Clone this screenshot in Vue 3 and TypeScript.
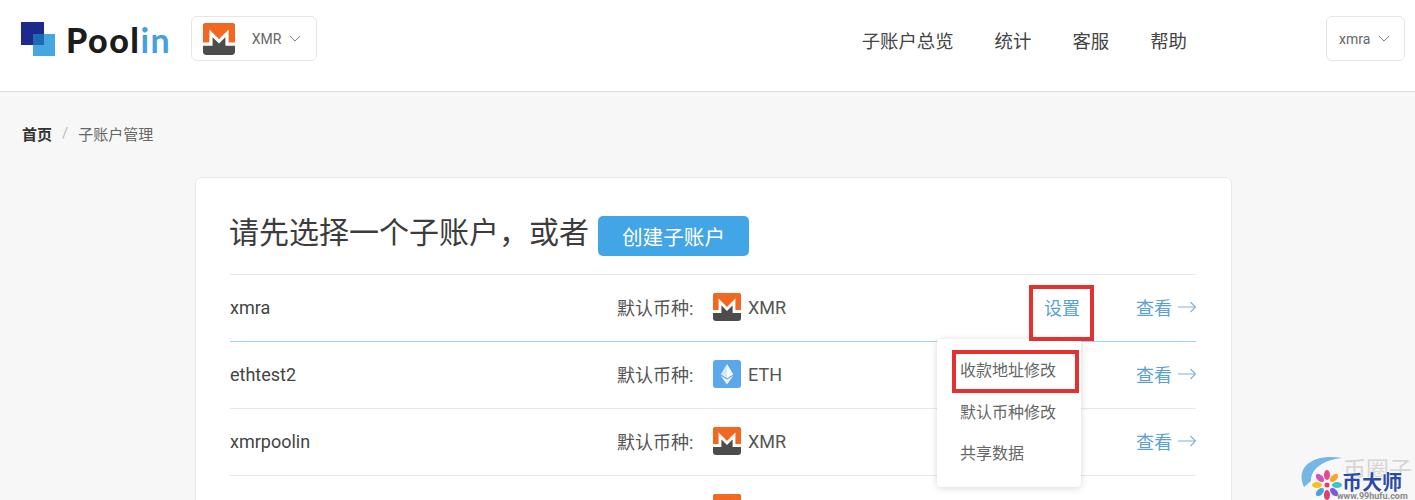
<script setup lang="ts">
interface Account {
  name: string;
  coin: 'XMR' | 'ETH';
}

const accounts: Account[] = [
  { name: 'xmra', coin: 'XMR' },
  { name: 'ethtest2', coin: 'ETH' },
  { name: 'xmrpoolin', coin: 'XMR' },
  { name: 'xmrtest', coin: 'XMR' },
];

const navItems = ['子账户总览', '统计', '客服', '帮助'];
const menuItems = ['收款地址修改', '默认币种修改', '共享数据'];
const petals = ['#e8478f', '#f5a623', '#41c1c8', '#7a5be0', '#e23d6d', '#4aa3e0', '#f0c419', '#d94fc0'];
</script>

<template>
  <div class="page">
    <header class="header">
      <div class="logo">
        <svg class="logo-mark" viewBox="0 0 35 35" width="35" height="35">
          <rect x="0" y="0" width="23" height="23" fill="#1d2a8c" />
          <rect x="12" y="12" width="22" height="22" fill="#45a6e2" />
          <rect x="12" y="12" width="11" height="11" fill="#1f69b1" />
        </svg>
        <span class="logo-text">Pool<em>in</em></span>
      </div>
      <div class="select coin-select">
        <svg class="coin-lg" viewBox="0 0 28 28">
          <use href="#monero" />
        </svg>
        <span>XMR</span>
        <svg class="chevron" viewBox="0 0 14 8"><path d="M1 1l6 6 6-6" /></svg>
      </div>
      <nav class="nav">
        <a v-for="item in navItems" :key="item">{{ item }}</a>
      </nav>
      <div class="select user-select">
        <span>xmra</span>
        <svg class="chevron" viewBox="0 0 14 8"><path d="M1 1l6 6 6-6" /></svg>
      </div>
    </header>

    <svg class="defs" width="0" height="0">
      <defs>
        <symbol id="monero" viewBox="0 0 28 28">
          <rect width="28" height="28" rx="3" fill="#4c4c4c" />
          <path d="M3 0h22a3 3 0 013 3v15.500H21V9l-7 7-7-7v9.500H0V3a3 3 0 013-3z" fill="#f26822" />
          <path d="M0 18.500h7V9l7 7 7-7v9.500h7" fill="none" stroke="#fff" stroke-width="2.800" />
        </symbol>
      </defs>
    </svg>

    <div class="breadcrumb">
      <strong>首页</strong>
      <i>/</i>
      <span>子账户管理</span>
    </div>

    <section class="card">
      <div class="title">
        <h1>请先选择一个子账户，或者</h1>
        <button class="create">创建子账户</button>
      </div>
      <div
        v-for="(account, index) in accounts"
        :key="account.name"
        class="row"
        :class="{ active: index === 0 }"
      >
        <span class="name">{{ account.name }}</span>
        <div class="coin">
          <span class="coin-label">默认币种:</span>
          <svg v-if="account.coin === 'XMR'" class="coin-icon" viewBox="0 0 28 28">
            <use href="#monero" />
          </svg>
          <svg v-else class="coin-icon" viewBox="0 0 28 28">
            <rect width="28" height="28" rx="3" fill="#5aa7ec" />
            <path d="M14 4l-6.300 10.400L14 18.200z" fill="#fff" opacity=".75" />
            <path d="M14 4l6.300 10.400L14 18.200z" fill="#fff" opacity=".95" />
            <path d="M7.700 15.700L14 19.500l6.300-3.800L14 24.500z" fill="#fff" opacity=".9" />
          </svg>
          <span class="coin-name">{{ account.coin }}</span>
        </div>
        <a class="settings">
          设置
          <template v-if="index === 0">
            <span class="mark mark-settings"></span>
            <div class="menu">
              <div v-for="item in menuItems" :key="item" class="menu-item">{{ item }}</div>
              <span class="mark mark-menu"></span>
            </div>
          </template>
        </a>
        <a class="view">
          查看
          <svg viewBox="0 0 18 12" width="18" height="12"><path d="M0 6h17.500M12.500 1l5 5-5 5" /></svg>
        </a>
      </div>
    </section>

    <div class="watermark">
      <svg viewBox="0 0 60 46" width="60" height="46">
        <path d="M6 33C-3 14 14-1 44 4 26 6 13 14 13 27z" fill="#74b6e4" />
        <ellipse
          v-for="(color, i) in petals"
          :key="i"
          cx="29"
          cy="21"
          rx="3"
          ry="5"
          :fill="color"
          :transform="`rotate(${i * 45} 29 31)`"
        />
        <circle cx="29" cy="31" r="2.500" fill="#e23d6d" />
      </svg>
      <span class="wm-top">币圈子</span>
      <span class="wm-main">币大师</span>
      <span class="wm-url">www.99hufu.com</span>
    </div>
  </div>
</template>

<style scoped>
.page {
  position: relative;
  height: 500px;
  overflow: hidden;
  background: #f7f7f7;
  color: #444;
  font-family: Roboto, "Noto Sans CJK SC", sans-serif;
}

.defs {
  position: absolute;
}

.header {
  display: flex;
  align-items: flex-start;
  height: 75px;
  padding: 16px 10px 0 21px;
  background: #fff;
  border-bottom: 1px solid #dcdcdc;
}

.logo {
  display: flex;
  width: 170px;
  padding-top: 6px;
}

.logo-mark {
  flex: none;
}

.logo-text {
  margin: 1px 0 0 10px;
  font-family: Lato, sans-serif;
  font-size: 34px;
  line-height: 34px;
  font-weight: 900;
  letter-spacing: 1.500px;
  color: #1c1c1c;
}

.logo-text em {
  font-style: normal;
  font-weight: 700;
  color: #45a1d9;
}

.select {
  display: flex;
  align-items: center;
  flex: none;
  height: 45px;
  box-sizing: border-box;
  background: #fff;
  border: 1px solid #e6e6e6;
  border-radius: 6px;
  font-size: 14px;
  color: #666;
}

.coin-select {
  width: 126px;
  padding-left: 11px;
}

.coin-lg {
  width: 32px;
  height: 32px;
  margin-right: 17px;
}

.user-select {
  width: 79px;
  padding-left: 12px;
}

.chevron {
  width: 12px;
  height: 7px;
  margin-left: 8px;
  fill: none;
  stroke: #666;
  stroke-width: 1;
}

.nav {
  display: flex;
  flex: none;
  gap: 41px;
  margin-left: 545px;
  margin-right: 139px;
  padding-top: 12px;
  font-size: 18.400px;
  line-height: 27px;
  color: #444;
  white-space: nowrap;
}

.breadcrumb {
  display: flex;
  align-items: center;
  height: 20px;
  margin: 31px 0 0 22px;
  font-size: 15px;
  color: #666;
}

.breadcrumb strong {
  font-weight: 700;
  color: #333;
}

.breadcrumb i {
  margin: 0 10px;
  font-style: normal;
  color: #bbb;
}

.card {
  width: 966px;
  margin: 34px 0 0 195px;
  padding: 0 35px 0 34px;
  background: #fff;
  border: 1px solid #e9e9e9;
  border-radius: 6px;
}

.title {
  display: flex;
  align-items: flex-start;
  height: 58px;
  padding-top: 38px;
}

.title h1 {
  margin: -3px 9px 0 -1px;
  font-size: 30px;
  line-height: 40px;
  font-weight: 400;
  color: #3c3c3c;
  white-space: nowrap;
}

.create {
  width: 151px;
  height: 40px;
  padding: 0;
  border: 0;
  border-radius: 5px;
  background: #42a5e6;
  color: #fff;
  font-family: inherit;
  font-size: 20.600px;
}

.row {
  display: flex;
  align-items: center;
  height: 64px;
  padding-bottom: 2px;
  border-top: 1px solid #e8e8e8;
  font-size: 18px;
}

.row.active + .row {
  border-top-color: #9ed3ec;
}

.name {
  width: 387px;
  color: #444;
}

.coin {
  display: flex;
  align-items: center;
  flex: 1;
}

.coin-label {
  width: 96px;
  color: #555;
}

.coin-icon {
  width: 28px;
  height: 28px;
  margin-right: 7px;
}

.coin-name {
  color: #555;
}

.settings {
  position: relative;
  margin-right: 56px;
  color: #58a1d6;
}

.view {
  display: flex;
  align-items: center;
  gap: 6px;
  color: #58a1d6;
}

.view svg {
  fill: none;
  stroke: #7ab3dc;
  stroke-width: 1.100;
}

.mark {
  position: absolute;
  border: 4px solid #e4312f;
  box-sizing: border-box;
  z-index: 2;
}

.mark-settings {
  left: -15px;
  top: -9px;
  width: 65px;
  height: 56px;
}

.menu {
  position: absolute;
  top: 45px;
  left: -107px;
  width: 144px;
  height: 148px;
  box-sizing: border-box;
  padding: 11px 0 0 23px;
  background: #fff;
  border-radius: 4px;
  box-shadow: 0 1px 7px rgba(0, 0, 0, 0.16);
  z-index: 1;
  font-size: 16px;
  color: #666;
}

.menu::before {
  content: "";
  position: absolute;
  top: -4px;
  left: 121px;
  width: 8px;
  height: 8px;
  background: #fff;
  transform: rotate(45deg);
}

.menu-item {
  height: 41.500px;
  line-height: 41.500px;
  white-space: nowrap;
}

.mark-menu {
  left: 15px;
  top: 11px;
  width: 127px;
  height: 43px;
}

.watermark {
  position: absolute;
  left: 1298px;
  top: 454px;
  width: 117px;
  height: 46px;
}

.watermark span {
  position: absolute;
  white-space: nowrap;
}

.wm-top {
  left: 45px;
  top: 3px;
  font-size: 23px;
  line-height: 28px;
  color: #d6d6d6;
}

.wm-main {
  left: 44px;
  top: 16px;
  font-size: 20px;
  line-height: 26px;
  font-weight: 700;
  color: #2a4aa5;
  text-shadow: 0 0 2px #fff, 0 0 2px #fff;
}

.wm-url {
  left: 39px;
  top: 38px;
  font-size: 9px;
  line-height: 8px;
  font-weight: 700;
  color: #8a8a8a;
}
</style>

<style>
html,
body {
  margin: 0;
  overflow: hidden;
}
</style>
